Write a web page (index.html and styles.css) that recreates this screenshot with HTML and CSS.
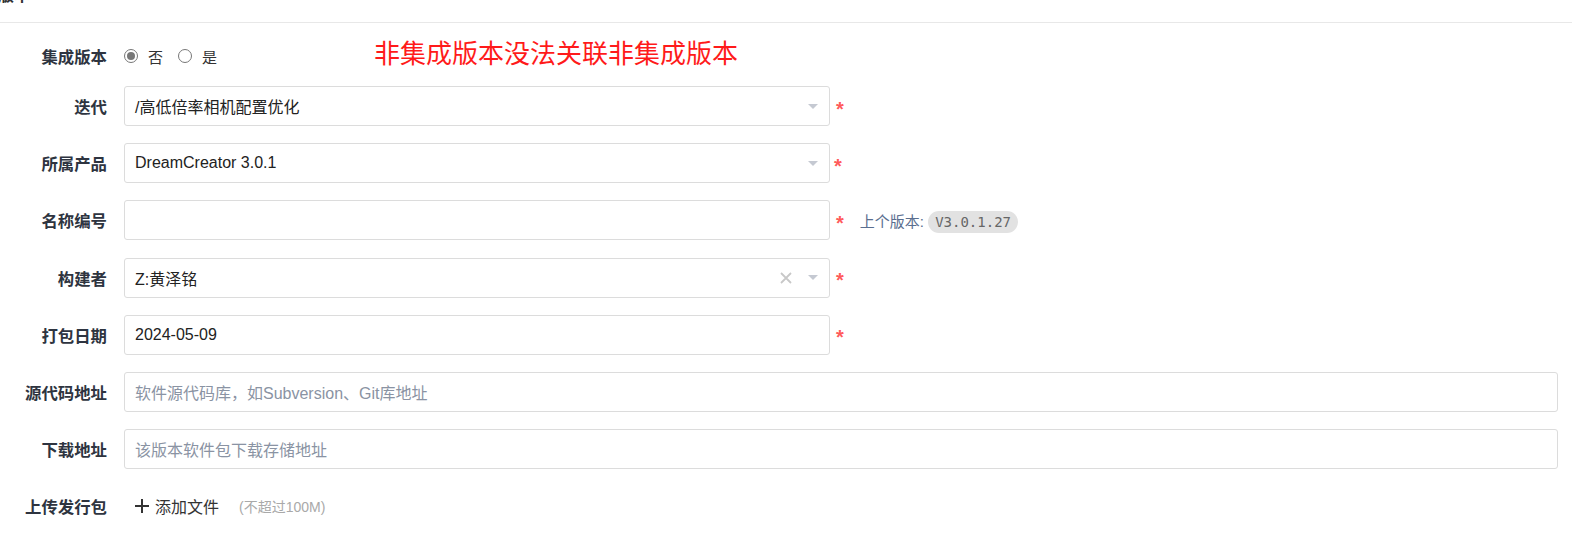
FILE: index.html
```html
<!DOCTYPE html>
<html lang="zh-CN">
<head>
  <meta charset="UTF-8">
  <title>版本</title>
  <link rel="stylesheet" href="styles.css">
</head>
<body>
  <div class="panel-head">
    <h3 class="panel-title">版本</h3>
  </div>

  <form class="version-form">
    <div class="form-row radio-row">
      <label class="form-label">集成版本</label>
      <div class="radio-group">
        <span class="radio checked"></span><span class="radio-text">否</span>
        <span class="radio"></span><span class="radio-text">是</span>
      </div>
      <span class="note-red">非集成版本没法关联非集成版本</span>
    </div>

    <div class="form-row">
      <label class="form-label">迭代</label>
      <div class="input select">
        <span class="value">/高低倍率相机配置优化</span>
        <span class="caret"></span>
      </div>
      <span class="required">*</span>
    </div>

    <div class="form-row">
      <label class="form-label">所属产品</label>
      <div class="input select">
        <span class="value">DreamCreator 3.0.1</span>
        <span class="caret"></span>
      </div>
      <span class="required tight">*</span>
    </div>

    <div class="form-row">
      <label class="form-label">名称编号</label>
      <div class="input"></div>
      <span class="required">*</span>
      <span class="prev-version">上个版本: <code class="badge">V3.0.1.27</code></span>
    </div>

    <div class="form-row">
      <label class="form-label">构建者</label>
      <div class="input select">
        <span class="value">Z:黄泽铭</span>
        <span class="clear">
          <svg width="12" height="12" viewBox="0 0 12 12"><path d="M1 1L11 11M11 1L1 11" stroke="#c8c8c8" stroke-width="1.8"/></svg>
        </span>
        <span class="caret"></span>
      </div>
      <span class="required">*</span>
    </div>

    <div class="form-row">
      <label class="form-label">打包日期</label>
      <div class="input">
        <span class="value">2024-05-09</span>
      </div>
      <span class="required">*</span>
    </div>

    <div class="form-row">
      <label class="form-label">源代码地址</label>
      <div class="input wide">
        <span class="placeholder">软件源代码库，如Subversion、Git库地址</span>
      </div>
    </div>

    <div class="form-row">
      <label class="form-label">下载地址</label>
      <div class="input wide">
        <span class="placeholder">该版本软件包下载存储地址</span>
      </div>
    </div>

    <div class="form-row upload-row">
      <label class="form-label">上传发行包</label>
      <span class="add-file">
        <svg width="14" height="14" viewBox="0 0 14 14"><path d="M7 0V14M0 7H14" stroke="#333" stroke-width="2"/></svg>
        添加文件
      </span>
      <span class="limit">(不超过100M)</span>
    </div>
  </form>
</body>
</html>
```

FILE: styles.css
```css
body {
  margin: 0;
  background: #fff;
  font-family: "Microsoft YaHei", "Liberation Sans", "Noto Sans CJK SC", sans-serif;
  color: #333;
  font-size: 16px;
}

.panel-head {
  height: 22px;
  border-bottom: 1px solid #e8e8e8;
  width: 1572px;
  overflow: hidden;
}

.panel-title {
  margin: -14px 0 0 -2px;
  font-size: 16px;
  font-weight: bold;
  color: #333;
  line-height: 20px;
}

.version-form {
  padding-top: 11px;
}

.form-row {
  display: flex;
  align-items: center;
  height: 40px;
  margin-bottom: 17.2px;
}

.radio-row {
  height: 44px;
  margin-bottom: 8px;
}

.form-label {
  width: 107px;
  text-align: right;
  font-size: 16.4px;
  font-weight: bold;
  color: #2e3440;
  margin-right: 17px;
  flex-shrink: 0;
}

.radio-group {
  display: flex;
  align-items: center;
  width: 250px;
}

.radio {
  width: 14px;
  height: 14px;
  border: 1px solid #777;
  border-radius: 50%;
  box-sizing: border-box;
  position: relative;
}

.radio.checked::after {
  content: "";
  position: absolute;
  left: 2px;
  top: 2px;
  width: 8px;
  height: 8px;
  border-radius: 50%;
  background: #777;
}

.radio-text {
  font-size: 15px;
  margin: 0 15px 0 10px;
  color: #333;
}

.note-red {
  color: #ff1a1a;
  font-size: 26px;
  margin-top: -10px;
}

.input {
  width: 706px;
  height: 40px;
  box-sizing: border-box;
  border: 1px solid #dcdcdc;
  border-radius: 3px;
  display: flex;
  align-items: center;
  padding: 0 10px;
  flex-shrink: 0;
}

.input.wide {
  width: 1434px;
}

.value {
  flex: 1;
  color: #222;
}

.placeholder {
  color: #8a93a3;
}

.caret {
  width: 0;
  height: 0;
  border-left: 5px solid transparent;
  border-right: 5px solid transparent;
  border-top: 5px solid #c5c9d2;
  margin-right: 1px;
}

.clear {
  display: flex;
  margin-right: 16px;
}

.required {
  color: #ff5b5b;
  font-size: 20px;
  font-weight: bold;
  margin-left: 6px;
  padding-top: 6px;
}

.required.tight {
  margin-left: 4px;
}

.prev-version {
  margin-left: 16px;
  color: #5a6e8f;
  font-size: 15px;
}

.badge {
  font-family: "DejaVu Sans Mono", "Liberation Mono", monospace;
  font-size: 14px;
  background: #e2e2e2;
  color: #666;
  padding: 3px 7px;
  border-radius: 11px;
}

.upload-row {
  margin-top: 2px;
}

.add-file {
  display: flex;
  align-items: center;
  gap: 6px;
  margin-left: 11px;
  color: #333;
}

.limit {
  margin-left: 20px;
  color: #a9a9a9;
  font-size: 14px;
}
```
